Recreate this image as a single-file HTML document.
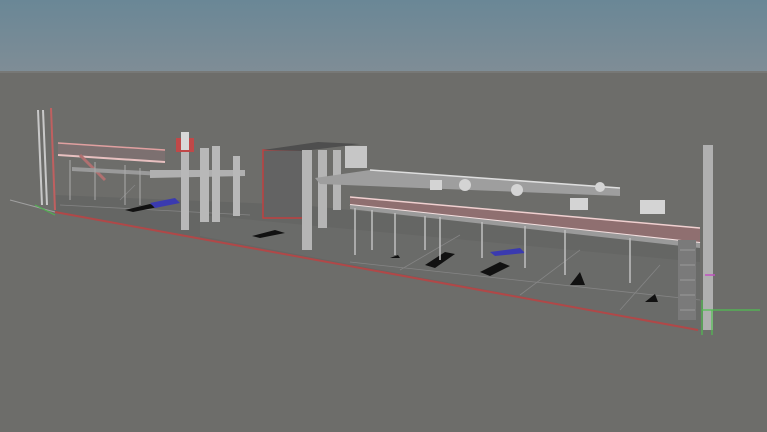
<!DOCTYPE html>
<html><head><style>
html,body{margin:0;padding:0;width:767px;height:432px;overflow:hidden;background:#6d6d6a}
</style></head><body>
<svg width="767" height="432" viewBox="0 0 767 432" xmlns="http://www.w3.org/2000/svg">
<defs>
<linearGradient id="sky" x1="0" y1="0" x2="0" y2="1">
<stop offset="0" stop-color="#6a8796"/><stop offset="1" stop-color="#7f8d96"/>
</linearGradient>
</defs>
<rect width="767" height="72" fill="url(#sky)"/>
<rect y="72" width="767" height="360" fill="#6d6d6a"/>
<rect y="71" width="767" height="2" fill="#777876"/>
<!-- floor slab -->
<polygon points="55,195 300,205 700,245 700,330 55,212" fill="#656664"/>
<polygon points="200,215 700,262 700,330 200,236" fill="#6a6b69"/>
<line x1="55" y1="212" x2="698" y2="330" stroke="#b04848" stroke-width="2"/>
<line x1="55" y1="212" x2="10" y2="200" stroke="#a0a0a0" stroke-width="1"/>
<g stroke="#858585" stroke-width="0.8">
<line x1="350" y1="262" x2="700" y2="300"/>
<line x1="400" y1="270" x2="460" y2="235"/>
<line x1="520" y1="295" x2="580" y2="250"/>
<line x1="620" y1="310" x2="660" y2="265"/>
<line x1="60" y1="205" x2="250" y2="215"/>
<line x1="120" y1="200" x2="135" y2="185"/>
</g>
<g fill="#111">
<polygon points="425,265 445,252 455,254 435,268"/>
<polygon points="480,272 500,262 510,266 490,276"/>
<polygon points="125,210 150,204 158,207 133,212"/>
<polygon points="570,285 580,272 585,285"/>
<polygon points="645,302 655,294 658,302"/>
<polygon points="252,236 275,230 285,233 260,238"/>
<polygon points="390,258 398,255 400,258"/>
</g>
<polygon points="150,203 175,198 180,203 155,208" fill="#3a3ab0"/>
<polygon points="490,252 520,248 525,253 495,256" fill="#3a3ab0"/>
<!-- left tall pillars -->
<g fill="none" stroke="#c8c8c8" stroke-width="2">
<line x1="38" y1="110" x2="42" y2="205"/><line x1="43" y1="110" x2="47" y2="205"/>
</g>
<line x1="51" y1="108" x2="55" y2="210" stroke="#c06060" stroke-width="2"/>
<!-- left platform -->
<polygon points="58,143 165,150 165,162 58,155" fill="#7c7070"/>
<line x1="58" y1="143" x2="165" y2="150" stroke="#e0a0a0" stroke-width="1.5"/>
<line x1="58" y1="155" x2="165" y2="162" stroke="#e8c0c0" stroke-width="2"/>
<line x1="80" y1="155" x2="105" y2="180" stroke="#b07070" stroke-width="3"/>
<polygon points="72,167 180,173 180,177 72,171" fill="#9a9a9a"/>
<polygon points="150,170 245,170 245,176 150,178" fill="#b0b0b0"/>
<g stroke="#aaa" stroke-width="1"><line x1="70" y1="160" x2="70" y2="200"/><line x1="95" y1="162" x2="95" y2="200"/><line x1="125" y1="165" x2="125" y2="205"/><line x1="140" y1="168" x2="140" y2="205"/></g>
<g fill="#b8b8b8">
<rect x="181" y="150" width="8" height="80"/>
<rect x="200" y="148" width="9" height="74"/>
<rect x="212" y="146" width="8" height="76"/>
<rect x="233" y="156" width="7" height="60"/>
</g>
<rect x="176" y="138" width="18" height="14" fill="#c04848"/>
<rect x="181" y="132" width="8" height="18" fill="#d8d8d8"/>
<!-- red frame building -->
<rect x="263" y="150" width="40" height="68" fill="#636363" stroke="#c04040" stroke-width="1.5"/>
<polygon points="263,150 318,142 360,144 303,151" fill="#4e4e4e"/>
<g fill="#b5b5b5">
<rect x="302" y="150" width="10" height="100"/>
<rect x="318" y="150" width="9" height="78"/>
<rect x="333" y="150" width="8" height="60"/>
</g>
<rect x="345" y="146" width="22" height="22" fill="#c6c6c6"/>
<!-- upper platform -->
<polygon points="315,178 370,170 620,188 620,196 320,184" fill="#9e9e9e"/>
<line x1="370" y1="170" x2="620" y2="188" stroke="#dedede" stroke-width="1.5"/>
<!-- main pink deck -->
<polygon points="350,197 700,228 700,243 350,205" fill="#8f6f70"/>
<line x1="350" y1="197" x2="700" y2="228" stroke="#f0d0d0" stroke-width="1.5"/>
<line x1="350" y1="205" x2="700" y2="243" stroke="#f4e0e0" stroke-width="2"/>
<polygon points="350,205 700,243 700,248 350,209" fill="#9a9a9a"/>
<g stroke="#c0c0c0" stroke-width="1.5">
<line x1="372" y1="210" x2="372" y2="250"/><line x1="395" y1="213" x2="395" y2="255"/>
<line x1="425" y1="216" x2="425" y2="250"/><line x1="440" y1="217" x2="440" y2="260"/>
<line x1="482" y1="222" x2="482" y2="258"/><line x1="525" y1="226" x2="525" y2="268"/>
<line x1="565" y1="230" x2="565" y2="275"/><line x1="630" y1="238" x2="630" y2="283"/>
<line x1="355" y1="208" x2="355" y2="255"/>
</g>
<g fill="#d4d4d4">
<circle cx="465" cy="185" r="6"/><circle cx="517" cy="190" r="6"/>
<circle cx="600" cy="187" r="5"/><rect x="430" y="180" width="12" height="10"/>
<rect x="570" y="198" width="18" height="12"/><rect x="640" y="200" width="25" height="14"/>
</g>
<!-- right tall column -->
<rect x="703" y="145" width="10" height="185" fill="#b0b0b0"/>
<rect x="678" y="240" width="18" height="80" fill="#7a7a7a"/>
<g stroke="#999" stroke-width="1"><line x1="680" y1="250" x2="695" y2="250"/><line x1="680" y1="265" x2="695" y2="265"/><line x1="680" y1="280" x2="695" y2="280"/><line x1="680" y1="295" x2="695" y2="295"/><line x1="680" y1="310" x2="695" y2="310"/></g>
<g stroke="#50c050" stroke-width="1.2"><line x1="702" y1="300" x2="702" y2="335"/><line x1="702" y1="310" x2="760" y2="310"/><line x1="712" y1="310" x2="712" y2="335"/></g>
<line x1="705" y1="275" x2="715" y2="275" stroke="#c050c0" stroke-width="1.5"/>
<line x1="35" y1="205" x2="55" y2="215" stroke="#50b050" stroke-width="1.2"/>
</svg>
</body></html>
